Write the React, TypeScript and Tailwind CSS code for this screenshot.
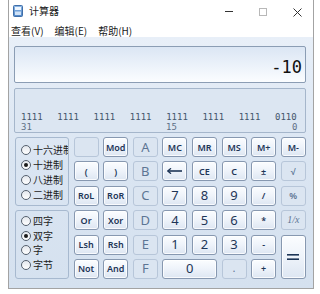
import React from "react";

const F = { fontFamily: '"Noto Sans", "Liberation Sans", "Noto Sans CJK SC", sans-serif' };
const CJK = { fontFamily: '"Noto Sans CJK SC", "Noto Sans", sans-serif' };
const MONO = { fontFamily: '"DejaVu Sans Mono", "Liberation Mono", monospace' };

type B = { t: React.ReactNode; d?: boolean; big?: boolean; cls?: string };

function Btn({ t, d, big, cls = "" }: B) {
  const base =
    "flex items-center justify-center rounded-[3px] border leading-none select-none " + cls;
  if (d)
    return (
      <div
        className={base + " border-[#b7c6d9] bg-[#dbe5f1] text-[#5d7594]"}
        style={{ ...F, fontSize: big ? 13 : 9, fontWeight: big ? 400 : 600 }}
      >
        {t}
      </div>
    );
  return (
    <div
      className={
        base +
        " border-[#8798b0] bg-gradient-to-b from-[#fbfdff] via-[#eef3fa] to-[#dde6f2] text-[#1d3557] shadow-[inset_0_0_0_1px_rgba(255,255,255,0.8)]"
      }
      style={{ ...F, fontSize: big ? 13 : 9, fontWeight: big ? 400 : 600 }}
    >
      {t}
    </div>
  );
}

function Radio({ label, on, h }: { label: string; on?: boolean; h: string }) {
  return (
    <div className={"flex items-center whitespace-nowrap " + h}>
      <div className="mr-[2px] flex h-[10px] w-[10px] shrink-0 items-center justify-center rounded-full border border-[#55606e] bg-gradient-to-b from-[#e4e8ee] to-[#ffffff]">
        {on && <div className="h-[4px] w-[4px] rounded-full bg-[#1a1a1a]" />}
      </div>
      <span className="text-[10px] leading-none text-[#1b1b1b]" style={CJK}>
        {label}
      </span>
    </div>
  );
}

function Group({ items, on, h, pt }: { items: string[]; on: number; h: string; pt: string }) {
  return (
    <div className={"row-span-3 overflow-hidden rounded-[3px] border border-[#a7b9cf] pl-[5px] " + pt}>
      {items.map((s, i) => (
        <Radio key={s} label={s} on={i === on} h={h} />
      ))}
    </div>
  );
}

export default function App() {
  const groups = ["1111", "1111", "1111", "1111", "1111", "1111", "1111", "0110"];
  return (
    <div className="h-[294px] w-[320px] overflow-hidden bg-white">
      <div className="ml-[8px] flex h-[289px] w-[306px] flex-col border-x border-b border-[#a3a3a3]">
        {/* title bar */}
        <div className="relative flex h-[22px] shrink-0 items-center bg-white">
          <svg className="ml-[4px] mt-[-1px]" width="10" height="12" viewBox="0 0 10 12">
            <defs>
              <linearGradient id="cg" x1="0" y1="0" x2="0" y2="1">
                <stop offset="0" stopColor="#8fb8e6" />
                <stop offset="1" stopColor="#4f86c6" />
              </linearGradient>
            </defs>
            <rect x="0.5" y="0.5" width="9" height="11" rx="1" fill="url(#cg)" stroke="#3f6ea8" />
            <rect x="2" y="2" width="6" height="3" fill="#eef6ff" />
            <rect x="2" y="6.5" width="6" height="3.5" fill="#cfe2f7" />
          </svg>
          <span className="ml-[6px] text-[10px] leading-none text-[#1a1a1a]" style={CJK}>
            计算器
          </span>
          <div className="absolute left-[216px] top-[11px] h-[1px] w-[8px] bg-[#333]" />
          <div className="absolute left-[250px] top-[8px] h-[8px] w-[8px] border border-[#b8b8b8]" />
          <svg className="absolute left-[284px] top-[8px]" width="9" height="9" viewBox="0 0 9 9">
            <path d="M0.5 0.5 L8.5 8.5 M8.5 0.5 L0.5 8.5" stroke="#333" strokeWidth="1" />
          </svg>
        </div>
        {/* menu */}
        <div className="flex h-[15px] shrink-0 items-center bg-white pl-[2px] pt-[3px] text-[10px] leading-none text-[#1a1a1a]" style={CJK}>
          <span>查看(V)</span>
          <span className="ml-[11px]">编辑(E)</span>
          <span className="ml-[11px]">帮助(H)</span>
        </div>
        {/* body */}
        <div className="flex flex-1 flex-col bg-gradient-to-b from-[#e8eff8] via-[#dae5f2] to-[#d5e1ef] pl-[5px] pt-[9px]">
          <div className="flex h-[37px] w-[292px] items-end justify-end rounded-[2px] border border-[#8b9db4] bg-gradient-to-b from-[#dbe6f4] to-[#fbfdff] pb-[6px] pr-[3px]">
            <span className="text-[17px] leading-none text-[#111]" style={MONO}>
              -10
            </span>
          </div>
          <div className="mt-[5px] h-[45px] w-[292px] rounded-[2px] border border-[#a5b6cb] bg-[#dce6f2] pl-[6px] pt-[23px]">
            <div className="flex gap-x-[14.6px] text-[9px] leading-[10px] text-[#44556c]" style={MONO}>
              {groups.map((g, i) => (
                <span key={i}>{g}</span>
              ))}
            </div>
            <div className="relative h-[10px] text-[9px] leading-[10px] text-[#5e6f86]" style={MONO}>
              <span className="absolute left-0">31</span>
              <span className="absolute left-[145px]">15</span>
              <span className="absolute left-[271px]">0</span>
            </div>
          </div>
          <div className="ml-[1px] mt-[4px] grid grid-cols-[54px_repeat(8,25px)] grid-rows-[repeat(6,20px)] gap-x-[4.6px] gap-y-[4.4px]">
            <Group items={["十六进制", "十进制", "八进制", "二进制"]} on={1} h="h-[15px]" pt="pt-[4px]" />
            <Btn t="" d />
            <Btn t="Mod" />
            <Btn t="A" d big />
            <Btn t="MC" />
            <Btn t="MR" />
            <Btn t="MS" />
            <Btn t="M+" />
            <Btn t="M-" />

            <Btn t="(" />
            <Btn t=")" />
            <Btn t="B" d big />
            <Btn
              t={
                <svg width="16" height="6" viewBox="0 0 16 6">
                  <path d="M1 3 H15" stroke="#1d3557" strokeWidth="1.6" />
                  <path d="M4 0.3 L0.8 3 L4 5.7" fill="none" stroke="#1d3557" strokeWidth="1.3" />
                </svg>
              }
            />
            <Btn t="CE" />
            <Btn t="C" />
            <Btn t="±" />
            <Btn t="√" d />

            <Btn t="RoL" />
            <Btn t="RoR" />
            <Btn t="C" d big />
            <Btn t="7" big />
            <Btn t="8" big />
            <Btn t="9" big />
            <Btn t="/" />
            <Btn t="%" d />

            <Group items={["四字", "双字", "字", "字节"]} on={1} h="h-[14.5px]" pt="pt-[3px]" />
            <Btn t="Or" />
            <Btn t="Xor" />
            <Btn t="D" d big />
            <Btn t="4" big />
            <Btn t="5" big />
            <Btn t="6" big />
            <Btn t="*" />
            <Btn t={<span style={{ fontFamily: '"Liberation Serif", serif', fontStyle: "italic", fontWeight: 400, fontSize: 10 }}>1/x</span>} d />

            <Btn t="Lsh" />
            <Btn t="Rsh" />
            <Btn t="E" d big />
            <Btn t="1" big />
            <Btn t="2" big />
            <Btn t="3" big />
            <Btn t="-" />
            <Btn
              cls="row-span-2"
              t={
                <svg width="12" height="8" viewBox="0 0 12 8">
                  <rect x="0" y="1" width="12" height="1.6" fill="#1d3557" />
                  <rect x="0" y="5.4" width="12" height="1.6" fill="#1d3557" />
                </svg>
              }
            />

            <Btn t="Not" />
            <Btn t="And" />
            <Btn t="F" d big />
            <Btn t="0" big cls="col-span-2" />
            <Btn t="." d />
            <Btn t="+" />
          </div>
        </div>
      </div>
    </div>
  );
}
